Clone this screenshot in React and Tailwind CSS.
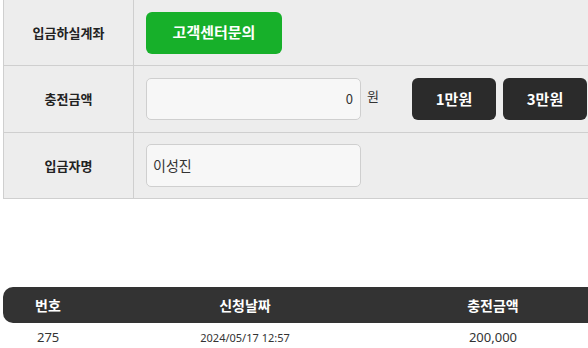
export default function App() {
  const font = { fontFamily: '"Malgun Gothic","Noto Sans CJK KR","Noto Sans",sans-serif' };
  return (
    <div className="w-[588px] h-[348px] bg-white overflow-hidden" style={font}>
      <div className="ml-[3px] w-[620px] border-l border-b border-[#cfcfcf] bg-[#ededed]">
        {/* row 1 */}
        <div className="flex h-[66px] border-b border-[#cfcfcf]">
          <div className="w-[130px] shrink-0 border-r border-[#cfcfcf] flex items-center justify-center text-[13px] font-bold text-[#222]">
            입금하실계좌
          </div>
          <div className="flex items-center pl-[12px]">
            <button className="w-[136px] h-[42px] rounded-[6px] bg-[#17b02a] text-white text-[15px] font-bold">
              고객센터문의
            </button>
          </div>
        </div>
        {/* row 2 */}
        <div className="flex h-[67px] border-b border-[#cfcfcf]">
          <div className="w-[130px] shrink-0 border-r border-[#cfcfcf] flex items-center justify-center text-[13px] font-bold text-[#222]">
            충전금액
          </div>
          <div className="flex items-center pl-[12px]">
            <div className="w-[215px] h-[42px] rounded-[5px] border border-[#cfcfcf] bg-[#f7f7f7] flex items-center justify-end pr-[7px] text-[13px] text-[#333]">
              0
            </div>
            <span className="ml-[6px] -mt-[6px] text-[13px] text-[#333]">원</span>
            <button className="ml-[33px] w-[84px] h-[42px] rounded-[6px] bg-[#2b2b2b] text-white text-[15px] font-bold">
              1만원
            </button>
            <button className="ml-[7px] w-[84px] h-[42px] rounded-[6px] bg-[#2b2b2b] text-white text-[15px] font-bold">
              3만원
            </button>
          </div>
        </div>
        {/* row 3 */}
        <div className="flex h-[65px]">
          <div className="w-[130px] shrink-0 border-r border-[#cfcfcf] flex items-center justify-center text-[13px] font-bold text-[#222]">
            입금자명
          </div>
          <div className="flex items-center pl-[12px]">
            <div className="w-[215px] h-[43px] rounded-[5px] border border-[#cfcfcf] bg-[#f7f7f7] flex items-center pl-[6px] text-[14px] text-[#333]">
              이성진
            </div>
          </div>
        </div>
      </div>

      <div className="mt-[88px] ml-[3px] w-[700px]">
        <div className="flex h-[36px] items-center bg-[#333333] rounded-l-[10px] text-white text-[14px] font-bold">
          <div className="w-[90px] text-center">번호</div>
          <div className="w-[304px] text-center">신청날짜</div>
          <div className="w-[192px] text-center">충전금액</div>
        </div>
        <div className="flex h-[30px] items-center text-[#333]" style={{ fontFamily: '"Noto Sans","Malgun Gothic","Noto Sans CJK KR",sans-serif' }}>
          <div className="w-[90px] pl-[34px] text-[13px]">275</div>
          <div className="w-[304px] text-center text-[11px]">2024/05/17 12:57</div>
          <div className="w-[192px] text-center text-[13px]">200,000</div>
        </div>
      </div>
    </div>
  );
}
